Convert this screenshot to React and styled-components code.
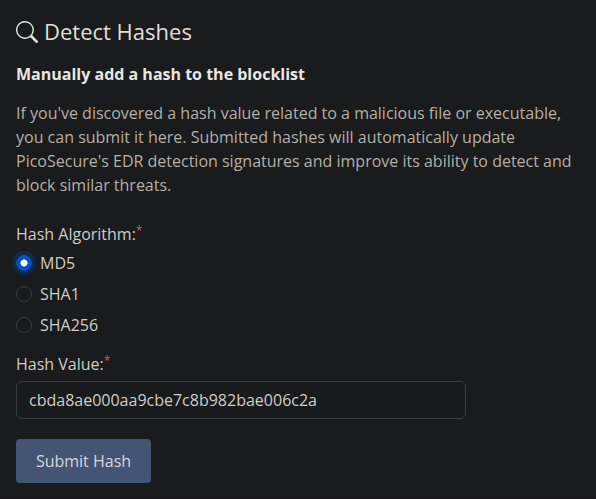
import React, { useState } from 'react';
import styled, { createGlobalStyle } from 'styled-components';
import { BsSearch } from 'react-icons/bs';

const GlobalStyle = createGlobalStyle`
  *, *::before, *::after { box-sizing: border-box; }
  body {
    margin: 0;
    background: #1a1b1d;
    color: #d0ccc6;
    font: 16px/24px "Open Sans", "Noto Sans", sans-serif;
    overflow: hidden;
  }
`;

const Panel = styled.main`
  height: 499px;
  padding: 16px;
  border-bottom: 1px solid #151518;
`;

const Title = styled.h1`
  display: flex;
  align-items: center;
  gap: 6px;
  height: 32px;
  margin: 0;
  font-size: 22px;
  font-weight: 400;
  color: #e2dfda;
`;

const TitleText = styled.span`
  padding-bottom: 2px;
`;

const SearchIcon = styled(BsSearch)`
  width: 22px;
  height: 22px;
`;

const Subtitle = styled.h2`
  margin: 14px 0 15px;
  font-size: 16px;
  line-height: 24px;
  font-weight: 700;
  color: #e8e6e3;
`;

const Description = styled.p`
  margin: 0 0 25px;
  color: #b5afa6;
  white-space: nowrap;
`;

const Label = styled.label`
  display: block;
  height: 24px;
`;

const Required = styled.span`
  color: #d65a54;
  font-size: 12px;
  vertical-align: 5px;
  line-height: 0;
`;

const Options = styled.div`
  display: grid;
  gap: 7px;
  margin: 5px 0 15px;
`;

const Option = styled.label`
  display: flex;
  align-items: center;
  gap: 8px;
  height: 24px;
`;

const Radio = styled.input`
  appearance: none;
  width: 16px;
  height: 16px;
  margin: 0;
  border: 1px solid #3b3e40;
  border-radius: 50%;
  background: #181a1b;

  &:checked {
    border-color: #0451c9;
    background: radial-gradient(circle, #fff 3.3px, #0451c9 3.8px);
    box-shadow: 0 0 0 4px #12284a;
  }
`;

const HashInput = styled.input`
  display: block;
  width: 450px;
  height: 38px;
  margin: 5px 0 20px;
  padding: 6px 12px;
  border: 1px solid #3b3e40;
  border-radius: 6px;
  background: #181a1b;
  color: #d0ccc6;
  font: inherit;
  outline: none;
`;

const SubmitButton = styled.button`
  width: 135px;
  height: 44px;
  padding: 0;
  border: 0;
  border-radius: 4px;
  background: #435475;
  color: #d6d8da;
  font: inherit;
`;

const ALGORITHMS = ['MD5', 'SHA1', 'SHA256'];

export default function App() {
  const [algorithm, setAlgorithm] = useState('MD5');
  const [hash, setHash] = useState('cbda8ae000aa9cbe7c8b982bae006c2a');
  return (
    <>
      <GlobalStyle />
      <Panel>
        <Title><SearchIcon /><TitleText>Detect Hashes</TitleText></Title>
        <Subtitle>Manually add a hash to the blocklist</Subtitle>
        <Description>
          If you've discovered a hash value related to a malicious file or executable,<br />
          you can submit it here. Submitted hashes will automatically update<br />
          PicoSecure's EDR detection signatures and improve its ability to detect and<br />
          block similar threats.
        </Description>
        <Label as="div">Hash Algorithm:<Required>*</Required></Label>
        <Options>
          {ALGORITHMS.map((name) => (
            <Option key={name}>
              <Radio type="radio" name="algorithm" checked={algorithm === name} onChange={() => setAlgorithm(name)} />
              {name}
            </Option>
          ))}
        </Options>
        <Label htmlFor="hash">Hash Value:<Required>*</Required></Label>
        <HashInput id="hash" value={hash} onChange={(e) => setHash(e.target.value)} />
        <SubmitButton type="button">Submit Hash</SubmitButton>
      </Panel>
    </>
  );
}
